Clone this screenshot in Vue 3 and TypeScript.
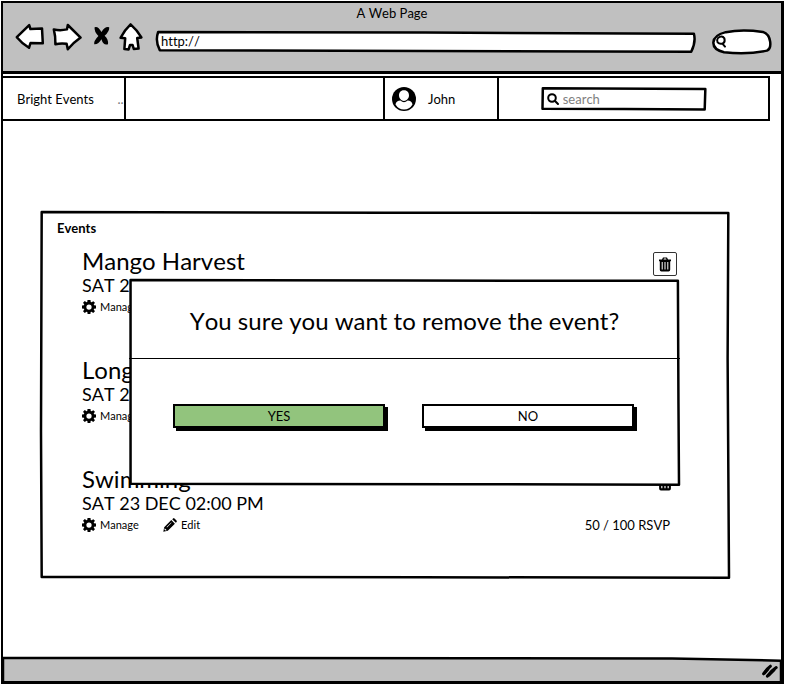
<script setup lang="ts">
import { ref } from 'vue'

interface EventItem {
  id: number
  title: string
  date: string
  rsvp?: string
  framed?: boolean
  editable?: boolean
}

const url = ref('http://')
const webQuery = ref('')
const query = ref('')

const events: EventItem[] = [
  { id: 1, title: 'Mango Harvest', date: 'SAT 2', framed: true },
  { id: 2, title: 'Long', date: 'SAT 2' },
  { id: 3, title: 'Swimming', date: 'SAT 23 DEC 02:00 PM', rsvp: '50 / 100 RSVP', editable: true },
]
</script>

<template>
  <div class="window">
    <header class="chrome">
      <div class="title">A Web Page</div>
      <div class="toolbar">
        <div class="controls">
          <button type="button" aria-label="Back">
            <svg width="30" height="28" viewBox="15 23 30 28" class="outline">
              <path d="M16.8 37.2L29.2 25.2L30.4 29L42 28.4Q42.4 36 42.8 43.3L30.5 43L29 47.8Q22 43.5 16.8 37.2Z" />
            </svg>
          </button>
          <button type="button" aria-label="Forward">
            <svg width="30" height="28" viewBox="53 23 30 28" class="outline">
              <path d="M53.8 29.4Q60 31 67 29.4L67.8 25L80.6 37.6Q73 43 67.8 49.2L66.6 43.8Q61 43 55.4 44.2Q55.6 36 53.8 29.4Z" />
            </svg>
          </button>
          <button type="button" aria-label="Stop">
            <svg width="20" height="28" viewBox="91 23 20 28">
              <path d="M94.6 27.2Q98 25.6 101.5 32Q105 26 109.2 27.2Q109.8 31 104.6 35.8Q108.5 39 108 44.2Q103.5 46 101.4 39.2Q98.5 44.6 94.2 44.2Q93.6 41 98.4 36Q94 31.4 94.6 27.2Z" />
            </svg>
          </button>
          <button type="button" aria-label="Home">
            <svg width="24" height="28" viewBox="118 23 24 28" class="outline">
              <path d="M129.6 24.4Q136 30 140.4 37.4L136.2 38L137.6 48.6L132.8 49L131.6 45L129 45L127.6 49.4L123.4 49L124.2 38.2L119.6 37.8Q123.6 30 129.6 24.4Z" />
            </svg>
          </button>
        </div>
        <label class="box address">
          <svg class="frame" viewBox="0 0 100 100" preserveAspectRatio="none" aria-hidden="true">
            <path d="M0.4 0L50 3L99.8 9Q100.2 50 99.3 99L50 95L0.7 91Q-0.2 45 0.4 0Z" />
          </svg>
          <input v-model="url" type="text" aria-label="Address">
        </label>
        <label class="box pill">
          <svg class="frame" viewBox="0 0 100 100" preserveAspectRatio="none" aria-hidden="true">
            <path d="M22 9Q50 -4 86 8C101 20 102 76 93 86Q60 104 19 93C-6 78 -6 26 22 9Z" />
          </svg>
          <svg class="glyph" width="12" height="14" viewBox="0 0 12 14" aria-hidden="true">
            <path d="M3 3Q7 0 9.4 3.4Q10.400 7 8 8.400Q4.600 9.600 2.600 7.400Q1.400 5 3 3ZM7.400 8.600L10 11.600" />
          </svg>
          <input v-model="webQuery" type="search" aria-label="Web search">
        </label>
      </div>
    </header>

    <nav class="navbar">
      <a href="#" class="cell brand"><span>Bright Events</span><span class="more">..</span></a>
      <div class="cell" />
      <a href="#" class="cell user">
        <svg width="24" height="24" viewBox="0 0 24 24" aria-hidden="true">
          <circle cx="12" cy="12" r="12" />
          <path fill="#fff" d="M3.500 17.500C3.800 14.800 6 13.800 8.400 13.600Q12 17 15.600 13.600C18 13.800 20.200 14.800 20.500 17.500Q17.500 22.500 12 22.500Q6.500 22.500 3.500 17.500ZM12 3.200C15.600 3.200 17.200 5.800 17 8.800C16.800 11.600 14.600 13.900 12 13.900C9.400 13.900 7.200 11.600 7 8.800C6.800 5.800 8.400 3.200 12 3.200Z" />
        </svg>
        <span>John</span>
      </a>
      <div class="cell find">
        <label class="box search">
          <svg class="frame" viewBox="0 0 100 100" preserveAspectRatio="none" aria-hidden="true">
            <path d="M0.500 1L99.600 5L99.200 98L50 96L0.300 94Z" />
          </svg>
          <svg width="12" height="12" viewBox="0 0 12 12" class="glyph" aria-hidden="true">
            <circle cx="5" cy="5" r="3.800" /><path d="M7.800 7.800L11 11" />
          </svg>
          <input v-model="query" type="search" placeholder="search" aria-label="Search events">
        </label>
      </div>
    </nav>

    <main>
      <section class="box card">
        <svg class="frame" viewBox="0 0 100 100" preserveAspectRatio="none" aria-hidden="true">
          <path d="M0.100 0L50 0.200L99.900 0.300L99.800 40L100 99.900L55 99.800L0.100 99.700L0 60Z" />
        </svg>
        <h1>Events</h1>
        <ul>
          <li v-for="event in events" :key="event.id">
            <div class="head">
              <h2>{{ event.title }}</h2>
              <button type="button" class="trash" :class="{ framed: event.framed }" :aria-label="`Remove ${event.title}`">
                <svg viewBox="0 0 14 15" aria-hidden="true">
                  <path fill-rule="evenodd" d="M1 2.500H4L5 0.500H9L10 2.500H13V4.200H12.200V12.800Q12.200 14.500 10.600 14.500H3.400Q1.800 14.500 1.800 12.800V4.200H1ZM5.500 2.500H8.500L8 1.500H6ZM3.700 5V12.500H4.700V5ZM6.500 5V12.500H7.500V5ZM9.300 5V12.500H10.300V5Z" />
                </svg>
              </button>
            </div>
            <p class="date">{{ event.date }}</p>
            <div class="actions">
              <button type="button" class="manage">
                <svg width="14" height="14" viewBox="0 0 16 16" aria-hidden="true">
                  <path fill-rule="evenodd" d="M6.300 0H9.700L10 2.200L11 2.700L12.900 1.300L14.800 3.200L13.400 5.100L13.800 6.100L16 6.400V9.600L13.800 9.900L13.400 10.900L14.800 12.800L12.800 14.800L10.900 13.400L9.900 13.800L9.600 16H6.400L6.100 13.800L5.100 13.400L3.200 14.800L1.200 12.800L2.600 10.900L2.200 9.900L0 9.600V6.400L2.200 6.100L2.600 5.100L1.200 3.200L3.200 1.200L5.100 2.600L6 2.200ZM8 5A3 3 0 1 0 8 11A3 3 0 1 0 8 5Z" />
                </svg>
                <span>Manage</span>
              </button>
              <button v-if="event.editable" type="button">
                <svg width="14" height="14" viewBox="0 0 14 14" aria-hidden="true">
                  <path fill-rule="evenodd" d="M0.300 13.700L1.200 9.200L8.300 2.100L11.900 5.700L4.800 12.800ZM1.700 10.200L1.400 11.600L2.400 12.600L3.800 12.300ZM3.600 9L4 9.400L8.600 4.800L8.200 4.400ZM9.200 1.200L10.100 0.400Q10.800 -0.200 11.500 0.500L13.500 2.500Q14.200 3.200 13.600 3.900L12.800 4.800Z" />
                </svg>
                <span>Edit</span>
              </button>
              <span v-if="event.rsvp" class="rsvp">{{ event.rsvp }}</span>
            </div>
          </li>
        </ul>

        <div class="modal" role="dialog" aria-labelledby="confirm-title">
          <svg class="frame" viewBox="0 0 100 100" preserveAspectRatio="none" aria-hidden="true">
            <path d="M0.100 0L50 0.300L99.800 0.400L99.900 60L100 99.900L60 99.600L0.100 99.400L0.100 50Z" />
          </svg>
          <h2 id="confirm-title">You sure you want to remove the event?</h2>
          <div class="choices">
            <button type="button" class="yes">YES</button>
            <button type="button">NO</button>
          </div>
        </div>
      </section>
    </main>

    <footer>
      <svg class="frame" viewBox="0 0 100 100" preserveAspectRatio="none" aria-hidden="true">
        <path d="M0 0L60 1L86 2L100 12V110H0Z" />
      </svg>
      <svg class="grip" width="16" height="14" viewBox="0 0 16 14" aria-hidden="true">
        <path d="M8.400 1.200Q5 3.400 1.600 8.800M14.200 2.600Q9 6 5.400 11.200" />
        <path d="M6 4L2.600 8M12 5L7 10" />
      </svg>
    </footer>
  </div>
</template>

<style>
body {
  background: #fff;
}
</style>

<style scoped>
* {
  box-sizing: border-box;
}

.window {
  display: flex;
  flex-direction: column;
  min-height: calc(100vh - 2px);
  margin: 1px 1px 0;
  border: 2px solid #000;
  border-width: 2px 3px 3px 2px;
  color: #000;
  background: #fff;
  font: 13px/20px Lato, "Open Sans", sans-serif;
  font-kerning: none;
  font-variant-ligatures: none;
}

button,
input {
  margin: 0;
  padding: 0;
  border: 0;
  color: inherit;
  background: none;
  font: inherit;
  font-kerning: inherit;
  font-variant-ligatures: inherit;
}

input {
  position: relative;
  flex: 1;
  width: 100%;
  min-width: 0;
  outline: 0;
  appearance: none;
}

a {
  color: inherit;
  text-decoration: none;
}

svg {
  display: block;
  flex: none;
  overflow: visible;
}

h1,
h2,
p,
ul {
  margin: 0;
  padding: 0;
  list-style: none;
  font-weight: 400;
}

.box {
  position: relative;
  display: flex;
  align-items: center;
}

.frame {
  position: absolute;
  inset: 1px;
  width: calc(100% - 2px);
  height: calc(100% - 2px);
}

.frame path {
  fill: #fff;
  stroke: #000;
  stroke-width: 2.5px;
  stroke-linejoin: round;
  vector-effect: non-scaling-stroke;
}

.chrome {
  height: 71px;
  border-bottom: 3px solid #000;
  background: #c0c0c0;
}

.title {
  text-align: center;
}

.toolbar {
  display: flex;
  align-items: flex-start;
  gap: 12px;
  padding: 0 9px 0 12px;
}

.controls {
  display: flex;
  gap: 8px;
}

.outline path {
  fill: #fff;
  stroke: #000;
  stroke-width: 2.5px;
  stroke-linejoin: round;
}

.glyph {
  position: relative;
}

.glyph * {
  fill: none;
  stroke: #000;
  stroke-width: 2px;
  stroke-linecap: round;
}

.address {
  flex: 1;
  height: 22px;
  margin-top: 8px;
  padding: 0 6px 2px;
}

.pill {
  width: 60px;
  height: 26px;
  margin: 6px 0 0 4px;
  padding: 0 8px 0 3px;
}

.navbar {
  display: grid;
  grid-template-columns: 121fr 260fr 114fr 272fr;
  height: 45px;
  margin: 2px 11px 0 -2px;
  border: 2px solid #000;
}

.cell {
  display: flex;
  align-items: center;
  min-width: 0;
}

.cell + .cell {
  border-left: 2px solid #000;
}

.brand {
  justify-content: space-between;
  padding-left: 14px;
}

.more {
  color: #777;
}

.user {
  gap: 12px;
  padding: 0 7px;
}

.search {
  gap: 4px;
  width: 166px;
  height: 24px;
  margin-left: 42px;
  padding: 0 6px;
}

.search input::placeholder {
  color: #808080;
  opacity: 1;
}

main {
  flex: 1;
  padding: 90px 51px 74px 37px;
}

.card {
  display: block;
  padding: 7px 53px 42px 17px;
}

.card h1 {
  position: relative;
  font-size: 13px;
  font-weight: 700;
}

.card ul {
  position: relative;
  display: grid;
  gap: 37px;
  padding: 9px 0 0 25px;
}

.head {
  display: flex;
  align-items: center;
  justify-content: space-between;
  height: 28px;
}

h2 {
  font-size: 24px;
  line-height: 28px;
}

.trash {
  display: grid;
  place-items: center;
  width: 24px;
  height: 24px;
  margin-top: 6px;
  border-radius: 2px;
}

.trash svg {
  width: 16px;
  height: 17px;
}

.framed {
  border: 1px solid #333;
}

.framed svg {
  width: 14px;
  height: 15px;
}

.date {
  font-size: 18px;
  line-height: 20px;
}

.actions {
  display: flex;
  align-items: center;
  height: 24px;
  font-size: 11px;
}

.actions button {
  display: flex;
  align-items: center;
  gap: 4px;
}

.manage {
  width: 81px;
}

.rsvp {
  margin: 0 7px 0 auto;
  font-size: 13px;
}

.modal {
  position: absolute;
  top: 68px;
  right: 50px;
  bottom: 93px;
  left: 89px;
  display: flex;
  flex-direction: column;
}

.modal h2 {
  position: relative;
  display: grid;
  place-items: center;
  height: 80px;
  padding-top: 5px;
  border-bottom: 1px solid #000;
}

.choices {
  position: relative;
  display: grid;
  grid-template-columns: 1fr 1fr;
  gap: 37px;
  padding: 45px 46px 0 44px;
}

.choices button {
  height: 24px;
  border: 2px solid #000;
  background: #fff;
  box-shadow: 3px 3px 0 #000;
  line-height: 20px;
}

.choices .yes {
  background: #92c47d;
}

footer {
  position: relative;
  display: flex;
  align-items: center;
  justify-content: flex-end;
  height: 24px;
  padding: 6px 3px 0 0;
}

footer .frame {
  inset: 1px 0 0;
  width: 100%;
  height: 22px;
}

footer .frame path {
  fill: #c0c0c0;
}

.grip {
  position: relative;
}

.grip path {
  fill: none;
  stroke: #000;
  stroke-width: 3px;
  stroke-linecap: round;
}
</style>
